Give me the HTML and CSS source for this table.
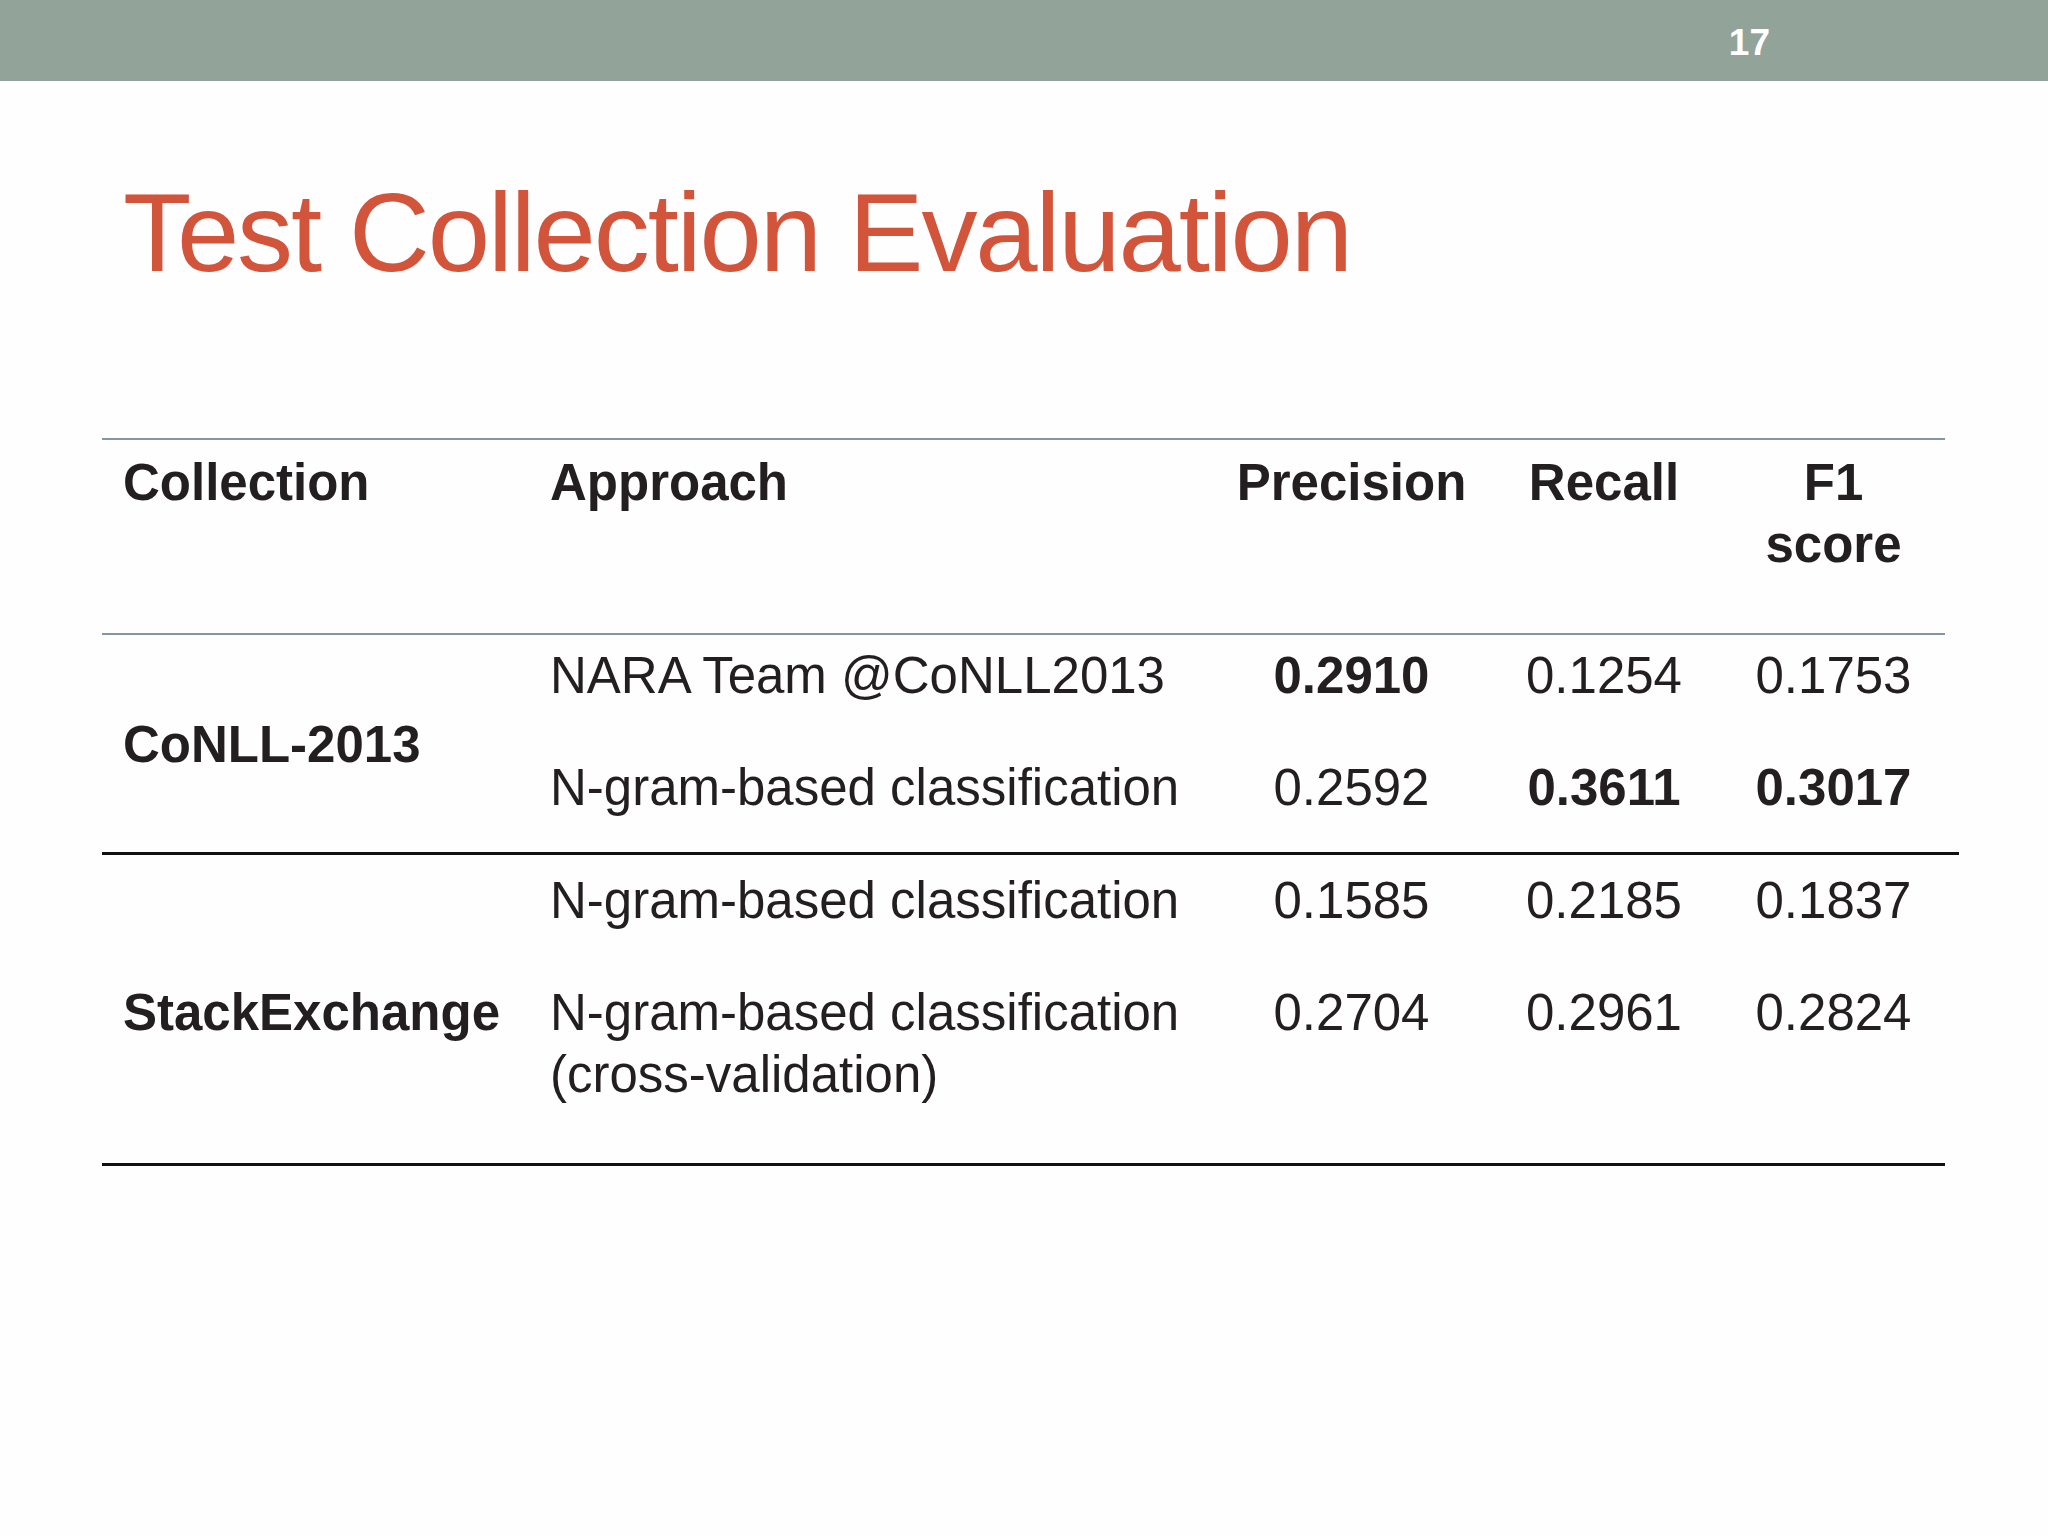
FILE: index.html
```html
<!DOCTYPE html>
<html lang="en">
<head>
<meta charset="utf-8">
<title>Test Collection Evaluation</title>
<link rel="stylesheet" href="styles.css">
</head>
<body>
<div class="slide">
  <header class="topbar"><span class="page-num">17</span></header>
  <h1 class="title">Test Collection Evaluation</h1>
  <div class="results">
    <div class="row-grid thead">
      <div class="cell left">Collection</div>
      <div class="cell left">Approach</div>
      <div class="cell num">Precision</div>
      <div class="cell num">Recall</div>
      <div class="cell num">F1<br>score</div>
    </div>
    <div class="row-grid group group-a">
      <div class="cell left coll">CoNLL-2013</div>
      <div class="cell left">NARA Team @CoNLL2013</div>
      <div class="cell num"><b>0.2910</b></div>
      <div class="cell num">0.1254</div>
      <div class="cell num">0.1753</div>
      <div class="cell left">N-gram-based classification</div>
      <div class="cell num">0.2592</div>
      <div class="cell num"><b>0.3611</b></div>
      <div class="cell num"><b>0.3017</b></div>
    </div>
    <div class="separator"></div>
    <div class="row-grid group group-b">
      <div class="cell left coll">StackExchange</div>
      <div class="cell left">N-gram-based classification</div>
      <div class="cell num">0.1585</div>
      <div class="cell num">0.2185</div>
      <div class="cell num">0.1837</div>
      <div class="cell left">N-gram-based classification<br>(cross-validation)</div>
      <div class="cell num">0.2704</div>
      <div class="cell num">0.2961</div>
      <div class="cell num">0.2824</div>
    </div>
  </div>
</div>
</body>
</html>
```
FILE: styles.css
```css
html, body {
  margin: 0;
  padding: 0;
  background: #fefefe;
}
.slide {
  width: 2048px;
  height: 1536px;
  font-family: "Liberation Sans", Arial, sans-serif;
  color: #231f20;
  overflow: hidden;
}
.topbar {
  height: 81px;
  background: #92a39a;
  display: flex;
  justify-content: flex-end;
  align-items: center;
  padding-right: 278px;
}
.page-num {
  color: #ffffff;
  font-weight: bold;
  font-size: 37px;
  line-height: 41px;
  padding-top: 4px;
}
.title {
  margin: 96px 0 0 123px;
  font-size: 112px;
  line-height: 112px;
  font-weight: normal;
  color: #d1543b;
  letter-spacing: -2.1px;
}
.results {
  margin: 149px 0 0 102px;
  width: 1857px;
}
.row-grid {
  display: grid;
  grid-template-columns: 427px 688px 269px 236px 223px;
  width: 1843px;
  font-size: 51px;
  line-height: 62px;
}
.cell {
  white-space: nowrap;
}
.cell.left {
  padding-left: 21px;
}
.cell.num {
  text-align: center;
}
.thead {
  border-top: 2px solid #8794a4;
  border-bottom: 2px solid #8794a4;
  height: 193px;
  font-weight: bold;
}
.thead .cell {
  padding-top: 12px;
}
.group-a {
  grid-template-rows: 112px 105px;
}
.group-a .cell {
  padding-top: 10px;
}
.group-b {
  grid-template-rows: 112px 196px;
  border-bottom: 3px solid #111111;
}
.group-b .cell {
  padding-top: 15px;
}
.group .coll {
  grid-row: span 2;
  align-self: center;
  padding-top: 3px;
  font-weight: bold;
}
.group-b .coll {
  padding-top: 8px;
}
.group b {
  font-weight: bold;
}
.separator {
  width: 1857px;
  height: 3px;
  background: #111111;
}
```
